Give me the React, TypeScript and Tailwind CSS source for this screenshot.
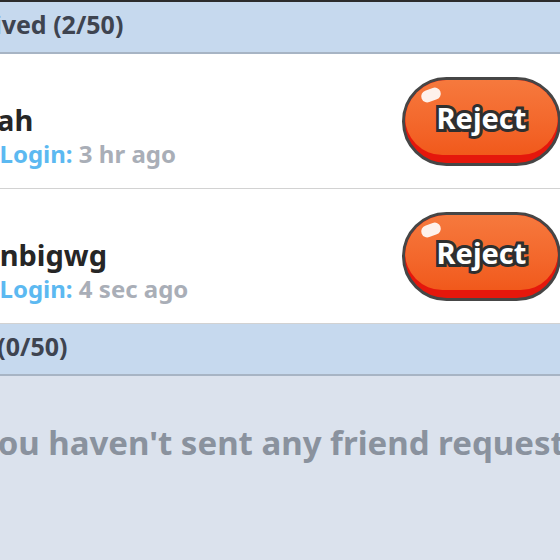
import React from 'react';

type Friend = { name: string; lastLogin: string };

const received: Friend[] = [
  { name: 'Norah', lastLogin: '3 hr ago' },
  { name: 'swenbigwg', lastLogin: '4 sec ago' },
];

const RejectButton: React.FC = () => (
  <button className="relative shrink-0 w-[159px] h-[89px] -mr-[1px] rounded-full border-[3px] border-[#464646] bg-[#e5170c] overflow-hidden">
    <div className="absolute left-0 right-0 top-0 bottom-[8px] rounded-full bg-gradient-to-b from-[#f6793d] to-[#f1591b]" />
    <div className="absolute left-[16px] top-[9px] w-[20px] h-[12px] rounded-full bg-white/90 -rotate-[20deg]" />
    <span className="relative block -mt-[6px] text-[29px] leading-[36px] font-bold text-white [paint-order:stroke_fill] [-webkit-text-stroke:6px_#2f2f2f]">
      Reject
    </span>
  </button>
);

const SectionHeader: React.FC<{ label: string }> = ({ label }) => (
  <div className="h-[52px] shrink-0 flex items-center bg-[#c6d9ee] border-b-2 border-[#a7b4c4]">
    <span className="-ml-[65px] -mt-[6px] text-[25px] leading-[32px] font-bold text-[#3e4450] whitespace-nowrap">
      {label}
    </span>
  </div>
);

export default function App() {
  return (
    <div
      className="w-[560px] h-[560px] overflow-hidden flex flex-col bg-[#dbe2ed] border-t-2 border-[#2c2c2c]"
      style={{ fontFamily: '"Noto Sans", "DejaVu Sans", sans-serif' }}
    >
      <SectionHeader label="Received (2/50)" />

      {received.map((f) => (
        <div
          key={f.name}
          className="h-[135px] shrink-0 flex items-center justify-between bg-white border-b border-[#d2d2d2]"
        >
          <div className="pt-[30px] -ml-[57px] whitespace-nowrap">
            <div className="text-[29px] leading-[36px] font-bold text-[#262626]">{f.name}</div>
            <div className="text-[24px] leading-[32px] font-bold">
              <span className="text-[#5cb9f1]">Last Login:</span>{' '}
              <span className="text-[#a9aeb7]">{f.lastLogin}</span>
            </div>
          </div>
          <RejectButton />
        </div>
      ))}

      <SectionHeader label="Sent (0/50)" />

      <div className="flex-1 flex items-center justify-center overflow-hidden">
        <span className="-mt-[50px] text-[33px] leading-[40px] font-bold text-[#8a929e] whitespace-nowrap">
          You haven't sent any friend requests
        </span>
      </div>
    </div>
  );
}
